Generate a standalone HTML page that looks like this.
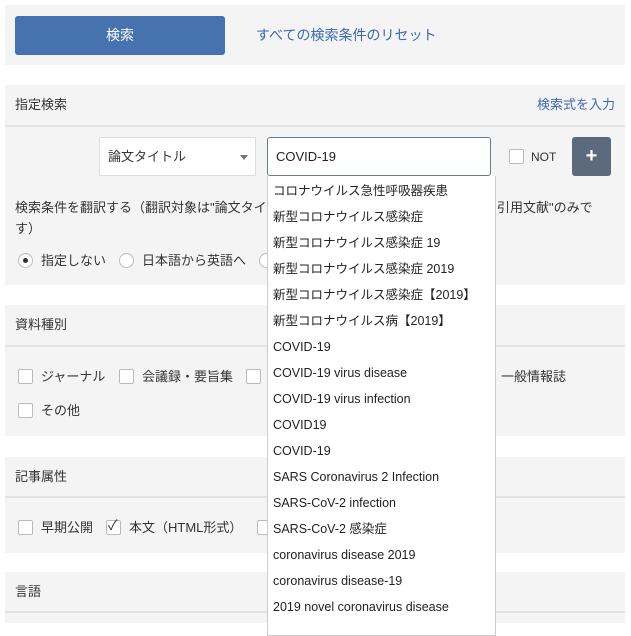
<!DOCTYPE html><html><head><meta charset="utf-8"><style>
*{box-sizing:border-box;margin:0;padding:0}
body{width:631px;height:623px;overflow:hidden;background:#fff;position:relative;font-family:"Liberation Sans","Noto Sans CJK JP",sans-serif;font-size:13px;color:#333}
.a{position:absolute}
.bg{background:#f4f4f4}
.hd{background:#f4f4f4;border-bottom:2px solid #e2e2e2}
.cb{position:absolute;width:15px;height:15px;border:1px solid #bbb;background:#fff;border-radius:2px}
.rd{position:absolute;width:15px;height:15px;border:1px solid #bbb;background:#fff;border-radius:50%}
.t{position:absolute;white-space:nowrap;line-height:16px}
.dd div{height:26px;line-height:26px;padding-left:5px;white-space:nowrap;font-size:12.5px;color:#222}
</style></head><body>
<div class="a bg" style="left:5px;top:5px;width:620px;height:60px"></div>
<div class="a" style="left:15px;top:16px;width:210px;height:39px;background:#4672b0;border-radius:3px;color:#fff;text-align:center;line-height:39px;font-size:14px">検索</div>
<div class="t" style="left:256px;top:27px;color:#3a67b5;font-size:14px">すべての検索条件のリセット</div>

<div class="a hd" style="left:5px;top:85px;width:620px;height:42px"></div>
<div class="t" style="left:15px;top:97px">指定検索</div>
<div class="t" style="left:537px;top:97px;color:#3a67b5">検索式を入力</div>
<div class="a bg" style="left:5px;top:127px;width:620px;height:158px"></div>
<div class="a" style="left:99px;top:137px;width:157px;height:39px;background:#fff;border:1px solid #ddd"></div>
<div class="t" style="left:108px;top:149px">論文タイトル</div>
<div class="a" style="left:240px;top:155px;width:0;height:0;border-left:4px solid transparent;border-right:4px solid transparent;border-top:5px solid #777"></div>
<div class="a" style="left:267px;top:137px;width:224px;height:39px;background:#fff;border:1.5px solid #6b7d8c;border-radius:3px"></div>
<div class="t" style="left:276px;top:149px;color:#222">COVID-19</div>
<div class="cb" style="left:509px;top:149px"></div>
<div class="t" style="left:531px;top:149px;font-size:12px">NOT</div>
<div class="a" style="left:572px;top:137px;width:39px;height:39px;background:#5b6b7d;border-radius:3px;color:#fff;text-align:center;line-height:38px;font-size:20px;font-weight:bold">+</div>
<div class="t" style="left:15px;top:200px">検索条件を翻訳する（翻訳対象は"論文タイ</div>
<div class="t" style="left:497px;top:200px">引用文献"のみで</div>
<div class="t" style="left:15px;top:221px">す）</div>
<div class="rd" style="left:18px;top:253px"></div>
<div class="a" style="left:23px;top:258px;width:5px;height:5px;border-radius:50%;background:#333"></div>
<div class="t" style="left:41px;top:253px">指定しない</div>
<div class="rd" style="left:119px;top:253px"></div>
<div class="t" style="left:142px;top:253px">日本語から英語へ</div>
<div class="rd" style="left:259px;top:253px"></div>

<div class="a hd" style="left:5px;top:305px;width:620px;height:42px"></div>
<div class="t" style="left:15px;top:317px">資料種別</div>
<div class="a bg" style="left:5px;top:347px;width:620px;height:89px"></div>
<div class="cb" style="left:18px;top:369px"></div><div class="t" style="left:41px;top:369px">ジャーナル</div>
<div class="cb" style="left:119px;top:369px"></div><div class="t" style="left:142px;top:369px">会議録・要旨集</div>
<div class="cb" style="left:246px;top:369px"></div>
<div class="t" style="left:501px;top:369px">一般情報誌</div>
<div class="cb" style="left:18px;top:403px"></div><div class="t" style="left:41px;top:403px">その他</div>

<div class="a hd" style="left:5px;top:457px;width:620px;height:41px"></div>
<div class="t" style="left:15px;top:469px">記事属性</div>
<div class="a bg" style="left:5px;top:498px;width:620px;height:55px"></div>
<div class="cb" style="left:18px;top:520px"></div><div class="t" style="left:41px;top:520px">早期公開</div>
<div class="cb" style="left:106px;top:520px"></div>
<div class="t" style="left:108px;top:517px;font-size:14px">✓</div>
<div class="t" style="left:129px;top:520px">本文（HTML形式）</div>
<div class="cb" style="left:257px;top:520px"></div>

<div class="a hd" style="left:5px;top:572px;width:620px;height:41px"></div>
<div class="t" style="left:15px;top:584px">言語</div>
<div class="a bg" style="left:5px;top:613px;width:620px;height:10px"></div>

<div class="a dd" style="left:267px;top:176px;width:229px;height:460px;background:#fff;border:1px solid #ccc;border-top:none;padding-top:2px">
<div>コロナウイルス急性呼吸器疾患</div>
<div>新型コロナウイルス感染症</div>
<div>新型コロナウイルス感染症 19</div>
<div>新型コロナウイルス感染症 2019</div>
<div>新型コロナウイルス感染症【2019】</div>
<div>新型コロナウイルス病【2019】</div>
<div>COVID-19</div>
<div>COVID-19 virus disease</div>
<div>COVID-19 virus infection</div>
<div>COVID19</div>
<div>COVID-19</div>
<div>SARS Coronavirus 2 Infection</div>
<div>SARS-CoV-2 infection</div>
<div>SARS-CoV-2 感染症</div>
<div>coronavirus disease 2019</div>
<div>coronavirus disease-19</div>
<div>2019 novel coronavirus disease</div>
</div>
</body></html>
